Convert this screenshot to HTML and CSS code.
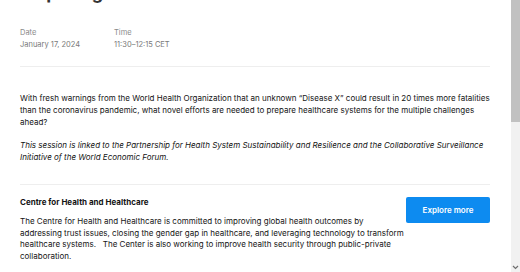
FILE: index.html
```html
<!DOCTYPE html>
<html lang="en">
<head>
<meta charset="utf-8">
<title>Preparing for Disease X</title>
<link rel="stylesheet" href="styles.css">
</head>
<body>
<div class="page">
  <main class="content">
    <h1 class="title">Preparing for Disease X</h1>
    <div class="meta">
      <div class="meta-item">
        <div class="meta-label">Date</div>
        <div class="meta-value">January 17, 2024</div>
      </div>
      <div class="meta-item">
        <div class="meta-label">Time</div>
        <div class="meta-value">11:30–12:15 CET</div>
      </div>
    </div>
    <hr class="divider divider-top">
    <p class="lead">With fresh warnings from the World Health Organization that an unknown “Disease X” could result in 20 times more fatalities than the coronavirus pandemic, what novel efforts are needed to prepare healthcare systems for the multiple challenges ahead?</p>
    <p class="note">This session is linked to the Partnership for Health System Sustainability and Resilience and the Collaborative Surveillance Initiative of the World Economic Forum.</p>
    <hr class="divider divider-mid">
    <section class="centre">
      <div class="centre-text">
        <h2 class="centre-title">Centre for Health and Healthcare</h2>
        <p class="centre-desc">The Centre for Health and Healthcare is committed to improving global health outcomes by addressing trust issues, closing the gender gap in healthcare, and leveraging technology to transform healthcare systems.&nbsp;&nbsp; The Center is also working to improve health security through public-private collaboration.</p>
      </div>
      <a class="btn" href="#">Explore more</a>
    </section>
  </main>
  <div class="scrollbar">
    <div class="thumb"></div>
    <div class="track"></div>
    <div class="arrow">
      <svg width="7" height="5" viewBox="0 0 7 5"><path d="M1 1 L3.5 3.5 L6 1" fill="none" stroke="#6f6f6f" stroke-width="1.2"/></svg>
    </div>
  </div>
</div>
</body>
</html>
```
FILE: styles.css
```css
* { box-sizing: border-box; }
html, body { margin: 0; padding: 0; background: #fff; }
body {
  font-family: Inter, "Noto Sans", "Liberation Sans", sans-serif;
  color: #141414;
  width: 520px;
  height: 272px;
  overflow: hidden;
}
.page {
  display: flex;
  height: 272px;
}
.content {
  flex: 1;
  padding: 0 21px 0 20px;
  overflow: hidden;
}
.title {
  font-size: 18px;
  line-height: 20px;
  font-weight: 700;
  color: #333;
  margin: -17px 0 0 -3px;
}
.meta {
  display: flex;
  margin-top: 24px;
}
.meta-item {
  width: 94px;
  font-size: 7.5px;
  line-height: 12px;
}
.meta-label { color: #8a8a8a; }
.meta-value { color: #7a7a7a; }
.divider {
  border: 0;
  border-top: 1px solid #eeeeee;
  margin: 0;
}
.divider-top { margin-top: 15px; }
.lead, .note {
  font-size: 8px;
  line-height: 12px;
  margin: 0;
}
.lead { margin-top: 25px; }
.note { margin-top: 11px; font-style: italic; }
.divider-mid { margin-top: 21px; }
.centre {
  display: flex;
  justify-content: space-between;
  align-items: flex-start;
  margin-top: 11px;
}
.centre-text { width: 384px; }
.centre-title {
  font-size: 8px;
  line-height: 12px;
  font-weight: 700;
  margin: 0;
}
.centre-desc {
  font-size: 8px;
  line-height: 11.6px;
  margin: 8px 0 0;
}
.btn {
  display: flex;
  align-items: center;
  justify-content: center;
  width: 84px;
  height: 26px;
  margin-top: 1px;
  background: #0d8bf0;
  color: #fff;
  font-size: 8px;
  font-weight: 600;
  text-decoration: none;
  border-radius: 2px;
}
.scrollbar {
  width: 9px;
  display: flex;
  flex-direction: column;
  background: #f1f1f1;
}
.thumb {
  height: 122px;
  background: #c1c1c1;
}
.track { flex: 1; }
.arrow {
  height: 10px;
  display: flex;
  align-items: center;
  justify-content: center;
}
```
